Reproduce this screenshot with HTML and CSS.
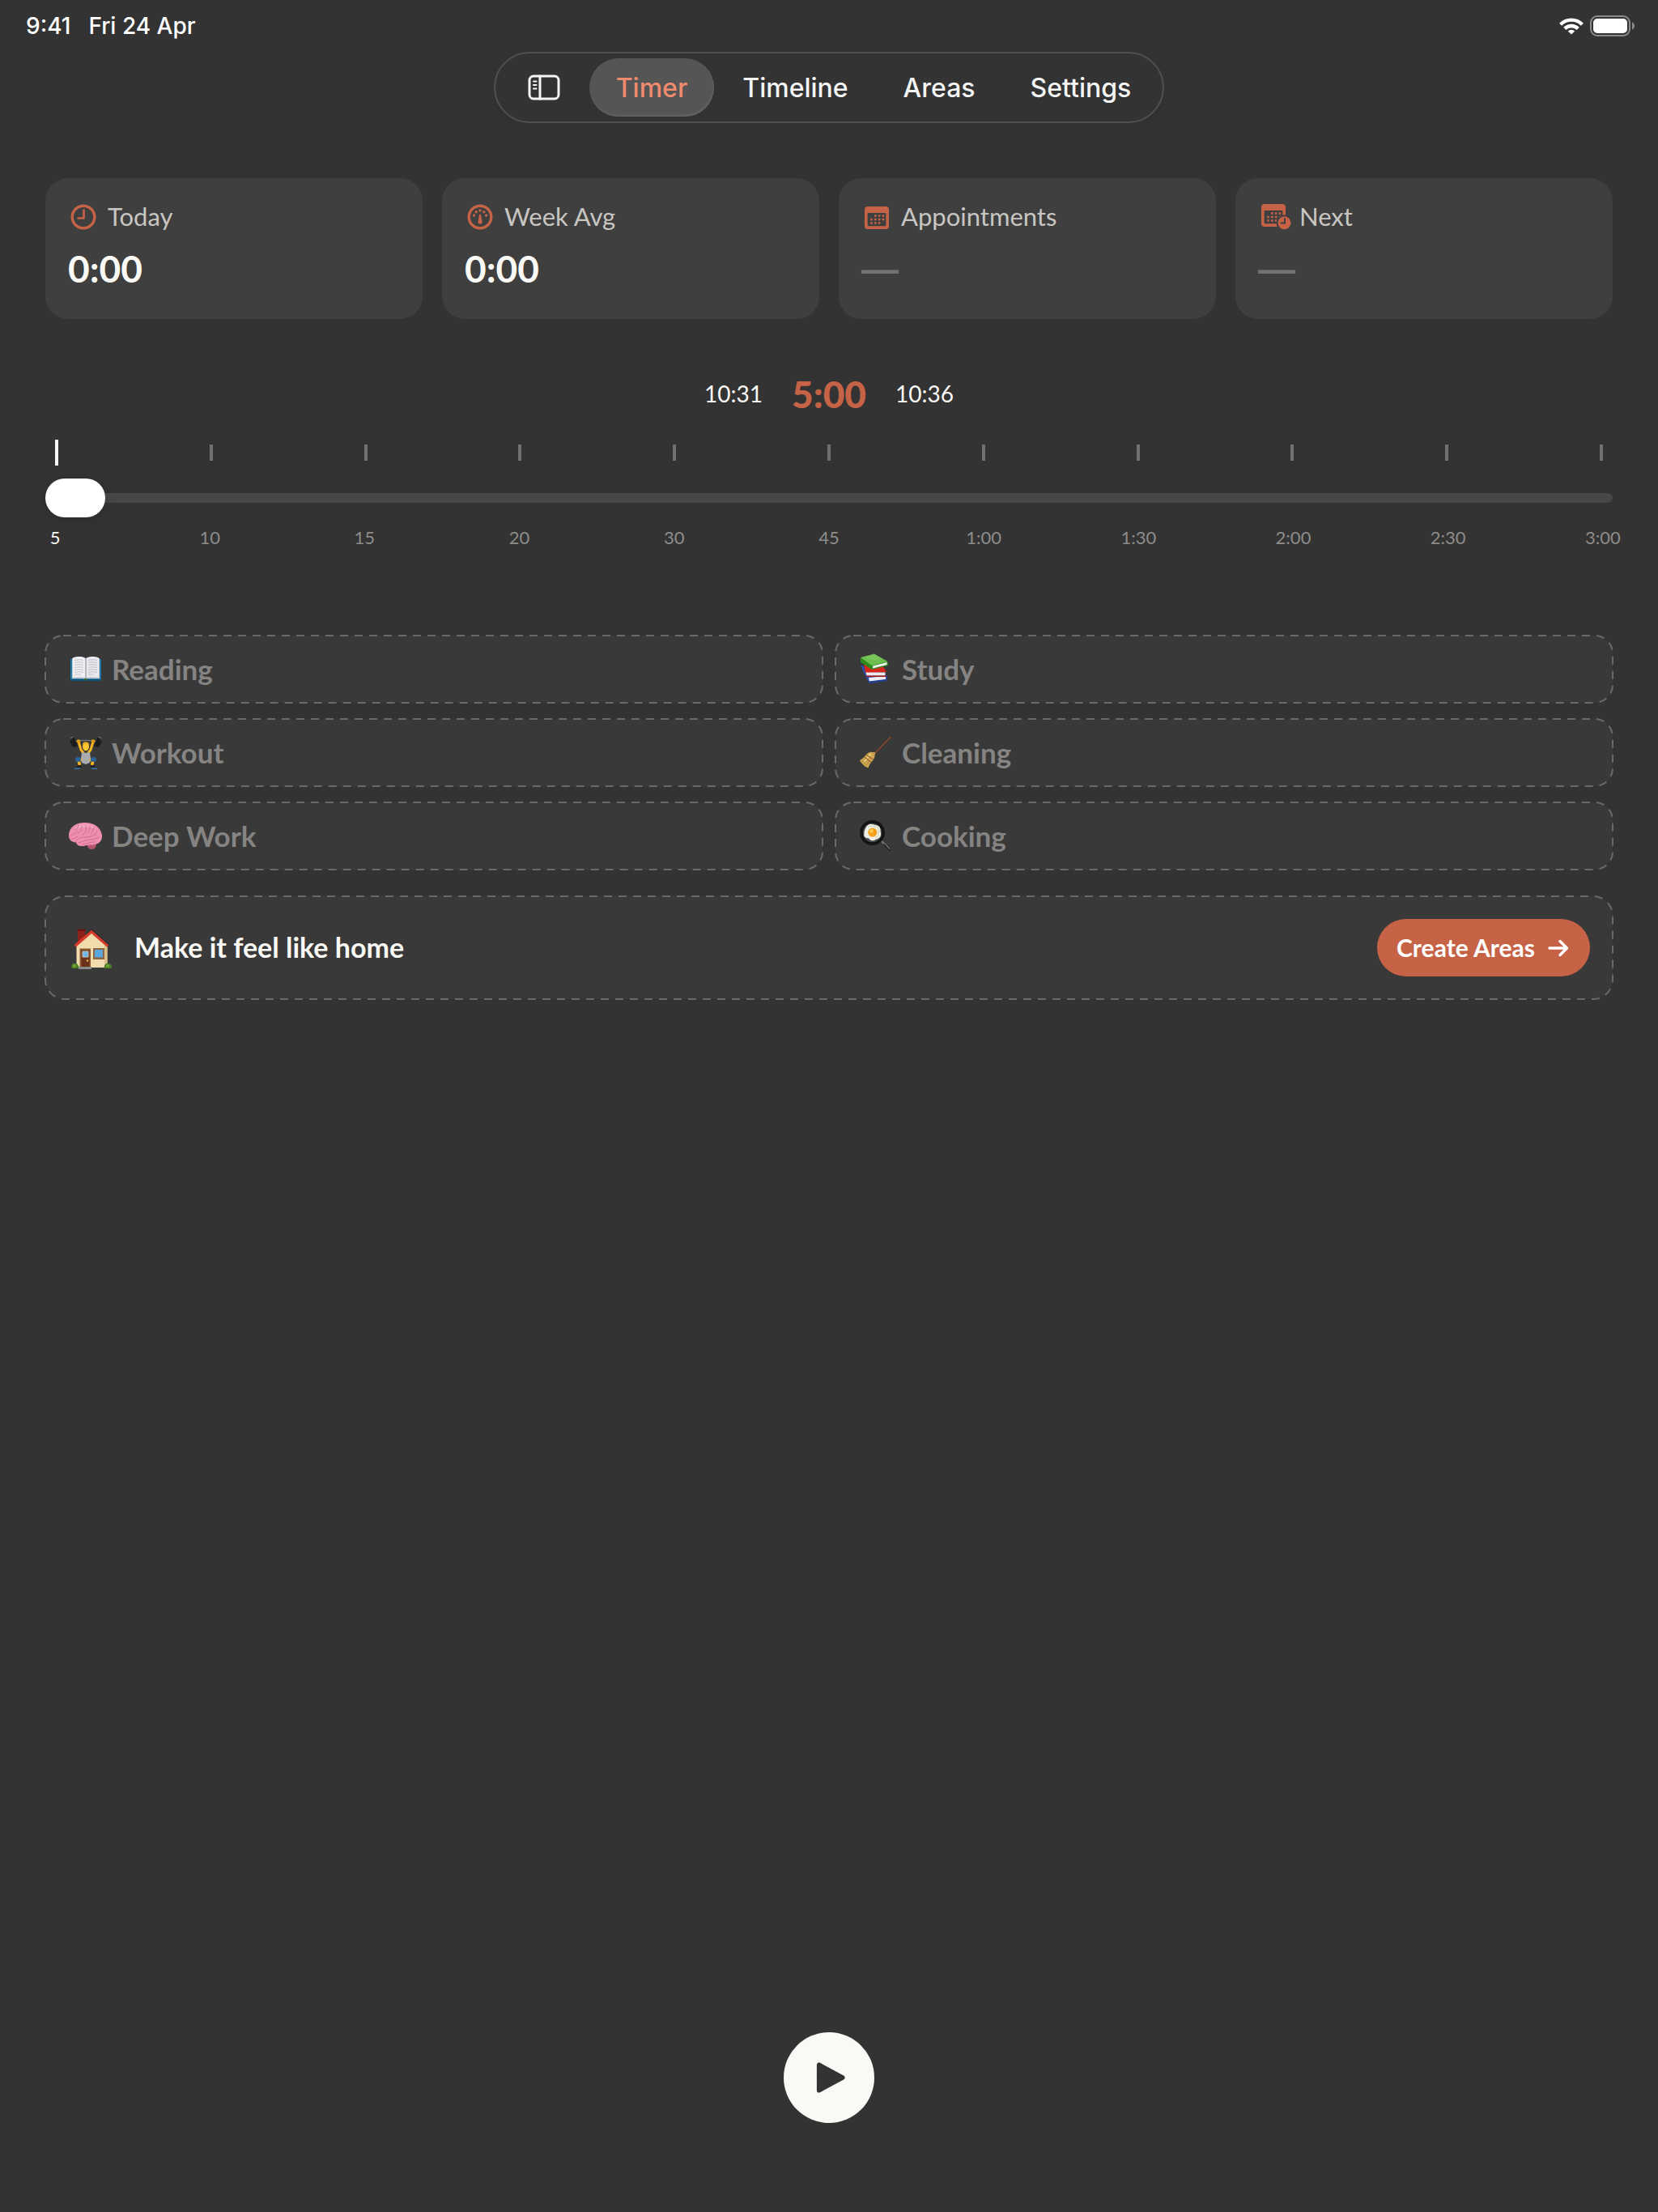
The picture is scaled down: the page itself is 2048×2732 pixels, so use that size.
FILE: index.html
```html
<!DOCTYPE html>
<html lang="en">
<head>
  <meta charset="UTF-8" />
  <meta name="viewport" content="width=device-width, initial-scale=1.0"/>
  <title>Timer</title>
  <link rel="stylesheet" href="styles.css">
</head>
<body>
  <div class="status-bar">
    <span>9:41</span>
    <span>Fri 24 Apr</span>
    <svg class="wifi" viewBox="0 0 30 21" aria-hidden="true">
      <g fill="none" stroke="#fff" stroke-width="4.4">
        <path d="M1.6 8.2a19 19 0 0 1 26.8 0"/>
        <path d="M6.8 13.4a11.6 11.6 0 0 1 16.4 0"/>
      </g>
      <path fill="#fff" d="M15 20.6l-4.2-4.2a6 6 0 0 1 8.4 0z"/>
    </svg>
    <svg class="battery" viewBox="0 0 56 26" aria-hidden="true">
      <rect x="1" y="1" width="48" height="24" rx="8" fill="none" stroke="#8b8b8b" stroke-width="2"/>
      <rect x="4" y="4" width="42" height="18" rx="5" fill="#fff"/>
      <path fill="#8b8b8b" d="M52 8.500c4 1.500 4 7.500 0 9z"/>
    </svg>
  </div>

  <nav class="tab-bar">
    <button class="sidebar-btn" aria-label="Show sidebar">
      <svg viewBox="0 0 40 32" aria-hidden="true">
        <g fill="none" stroke="#f5f5f5" stroke-width="3" stroke-linecap="round">
          <rect x="2" y="2" width="36" height="28" rx="5"/>
          <path d="M15 2v28"/>
          <path stroke-width="2" d="M7 8.500h3.500M7 13h3.500M7 17.500h3.500"/>
        </g>
      </svg>
    </button>
    <button class="tab active">Timer</button>
    <button class="tab">Timeline</button>
    <button class="tab">Areas</button>
    <button class="tab">Settings</button>
  </nav>

  <main>
    <section class="stats">
      <div class="stat">
        <div class="stat-label">
          <svg viewBox="0 0 32 32" aria-hidden="true">
            <g fill="none" stroke="#c66347" stroke-width="3.400" stroke-linecap="round" stroke-linejoin="round">
              <circle cx="16" cy="16" r="13.800"/>
              <path stroke-width="2.600" d="M16.500 7.500v10H9.500"/>
            </g>
          </svg>
          <span>Today</span>
        </div>
        <div class="stat-value">0:00</div>
      </div>
      <div class="stat">
        <div class="stat-label">
          <svg viewBox="0 0 32 32" aria-hidden="true">
            <circle cx="16" cy="16" r="13.800" fill="none" stroke="#c66347" stroke-width="3.400"/>
            <g fill="#c66347">
              <circle cx="8.400" cy="14" r="1.700"/>
              <circle cx="11.200" cy="9.800" r="1.700"/>
              <circle cx="16" cy="8" r="1.700"/>
              <circle cx="20.800" cy="9.800" r="1.700"/>
              <circle cx="23.600" cy="14" r="1.700"/>
              <path d="M16 12.500c.7 0 1 .6 1.100 1.200l1.500 8.300a2.600 2.600 0 1 1-5.200 0l1.500-8.300c.1-.6.4-1.200 1.100-1.200z"/>
            </g>
          </svg>
          <span>Week Avg</span>
        </div>
        <div class="stat-value">0:00</div>
      </div>
      <div class="stat">
        <div class="stat-label">
          <svg viewBox="0 0 32 32" aria-hidden="true">
            <path fill="#c66347" fill-rule="evenodd" d="M5 3h22a4 4 0 0 1 4 4v20a4 4 0 0 1-4 4H5a4 4 0 0 1-4-4V7a4 4 0 0 1 4-4zM5.600 11a1 1 0 0 0-1 1v14a1.200 1.200 0 0 0 1.200 1.200h20.400a1.200 1.200 0 0 0 1.200-1.200V12a1 1 0 0 0-1-1z"/>
            <g fill="none" stroke="#c66347" stroke-width="2.400" stroke-dasharray="2.600 2.200">
              <path d="M13 14.500h12.500"/>
              <path d="M8.200 19h17.500"/>
              <path d="M8.200 23.500h12.500"/>
            </g>
          </svg>
          <span>Appointments</span>
        </div>
        <div class="stat-value empty">—</div>
      </div>
      <div class="stat">
        <div class="stat-label">
          <svg class="wide" viewBox="0 0 38 32" aria-hidden="true">
            <path fill="#c66347" fill-rule="evenodd" d="M5 0h22a4 4 0 0 1 4 4v20a4 4 0 0 1-4 4H5a4 4 0 0 1-4-4V4a4 4 0 0 1 4-4zM5.600 8a1 1 0 0 0-1 1v14a1.200 1.200 0 0 0 1.200 1.200h20.400a1.200 1.200 0 0 0 1.200-1.200V9a1 1 0 0 0-1-1z"/>
            <g fill="none" stroke="#c66347" stroke-width="2.400" stroke-dasharray="2.600 2.200">
              <path d="M13 11.500h12.500"/>
              <path d="M8.200 16h17.500"/>
              <path d="M8.200 20.500h12.500"/>
            </g>
            <circle cx="29.500" cy="23.300" r="10" fill="#3f3f3f"/>
            <circle cx="29.500" cy="23.300" r="8" fill="#c66347"/>
            <path fill="none" stroke="#3f3f3f" stroke-width="2" stroke-linecap="round" d="M30 18v5.500h-4.500"/>
          </svg>
          <span>Next</span>
        </div>
        <div class="stat-value empty">—</div>
      </div>
    </section>

    <section class="duration">
      <div class="times">
        <span>10:31</span>
        <label class="length" for="duration">5:00</label>
        <span>10:36</span>
      </div>
      <div class="ticks">
        <i class="on"></i><i></i><i></i><i></i><i></i><i></i><i></i><i></i><i></i><i></i><i></i>
      </div>
      <input class="slider" id="duration" type="range" min="0" max="10" step="1" value="0">
      <div class="tick-labels">
        <span class="on">5</span>
        <span>10</span>
        <span>15</span>
        <span>20</span>
        <span>30</span>
        <span>45</span>
        <span>1:00</span>
        <span>1:30</span>
        <span>2:00</span>
        <span>2:30</span>
        <span>3:00</span>
      </div>
    </section>

    <section class="areas">
      <button class="area">
        <svg class="dashes" aria-hidden="true"><rect width="100%" height="100%" rx="22"/></svg>
        <svg class="emoji" viewBox="0 0 42 42" aria-hidden="true">
          <path fill="#2278a8" d="M3 8h38v27H3z"/>
          <path fill="#135274" d="M3 33h38v2H3z"/>
          <path fill="#c9c9d0" d="M5 7h34v25H25l-3 2-3-2H5z"/>
          <path fill="#f1f1f5" d="M6 6.500C11 4.500 18 4.500 21.500 7v24C17 29 11 29.500 6 30.500z"/>
          <path fill="#e9e9ef" d="M38 6.500C33 4.500 26 4.500 22.500 7v24C27 29 33 29.500 38 30.500z"/>
          <path fill="#9a9aa3" d="M21.400 6.500h1.200V32h-1.200z"/>
          <path fill="none" stroke="#b2b2ba" stroke-width=".8" d="M8 9.500c4-1 8-1 11 0M8 12.500c4-1 8-1 11 0M8 15.500c4-1 8-1 11 0M8 18.500c4-1 8-1 11 0M8 21.500c4-1 8-1 11 0M8 24.500c4-1 8-1 11 0M8 27.500c3-1 6-1 8 0M25 9.500c3-1 7-1 11 0M25 12.500c3-1 7-1 11 0M25 15.500c3-1 7-1 11 0M25 18.500c3-1 7-1 11 0M25 21.500c3-1 7-1 11 0M25 24.500c3-1 7-1 11 0M25 27.500c2-1 5-1 7 0"/>
          <path fill="#3d6b2f" d="M19.500 32h5l-1.500 2.500h-2z"/>
        </svg>
        <span>Reading</span>
      </button>
      <button class="area">
        <svg class="dashes" aria-hidden="true"><rect width="100%" height="100%" rx="22"/></svg>
        <svg class="emoji" viewBox="0 0 42 42" aria-hidden="true">
          <path fill="#2a4cae" d="M3 15l6 3 24 10 3 1-1 6-21 3-5-9z"/>
          <path fill="#ececf2" d="M13 31l21-2v4.500L14 36z"/>
          <path fill="#1f3a8f" d="M13 35.500l21-2.500v2l-20 2.500z"/>
          <path fill="#d9261c" d="M7 14l24 3 4 7-26 1z"/>
          <path fill="#f1e9e9" d="M9.500 24.500h24v4h-23z"/>
          <path fill="#a81812" d="M9.500 28.500h25V30h-24z"/>
          <path fill="#2f8a1e" d="M3 6v6l14 9 20-5v-2l-1-3z"/>
          <path fill="#f0f2ee" d="M18 16.500l17.500-4.500v3L18 19.500z"/>
          <path fill="#6cbf4f" d="M3 6l17-4.500L36.500 11 17 16z"/>
          <path fill="#86cf6a" d="M8 6l12-3.500L30 8l-8 2z" opacity=".5"/>
        </svg>
        <span>Study</span>
      </button>
      <button class="area">
        <svg class="dashes" aria-hidden="true"><rect width="100%" height="100%" rx="22"/></svg>
        <svg class="emoji" viewBox="0 0 42 42" aria-hidden="true">
          <path fill="none" stroke="#777" stroke-width="1.200" d="M5 7c10-2 24-2 34 0"/>
          <g fill="#1a1b1d">
            <path d="M4 2l3-1 5 11-4 2z"/>
            <path d="M2 6l3-1 3 8-2 1z"/>
            <path d="M40 2l-3-1-5 11 4 2z"/>
            <path d="M42 6l-3-1-3 8 2 1z"/>
          </g>
          <path fill="none" stroke="#8c8f92" stroke-width="1" d="M3.500 2.500l3-1.200M40.500 2.500l-3-1.200"/>
          <path fill="none" stroke="#f7b51d" stroke-width="3" stroke-linecap="round" stroke-linejoin="round" d="M13 7l3 10 3 4M31 7l-3 10-3 4"/>
          <circle cx="13" cy="6.500" r="2.300" fill="#e29a12"/>
          <circle cx="31" cy="6.500" r="2.300" fill="#e29a12"/>
          <ellipse cx="22" cy="13" rx="4" ry="5.200" fill="#fbc62f"/>
          <path fill="#e8a72a" d="M17.800 11c0-5 8.400-5 8.400 0-2-2-6-2-8.400 0z"/>
          <path fill="#a9abad" d="M17 20l5 1 5-1 1 8-1 5-5 2-5-2-1-5z"/>
          <path fill="none" stroke="#f7b51d" stroke-width="3.600" stroke-linejoin="round" d="M17 29l-4 1 1.500 6M27 29l4 1-1.500 6"/>
          <ellipse cx="12.500" cy="29" rx="3.600" ry="3" fill="#2b6396"/>
          <ellipse cx="31.500" cy="29" rx="3.600" ry="3" fill="#2b6396"/>
          <path fill="#202124" d="M10 39l2.500-3h4v3zM34 39l-2.500-3h-4v3z"/>
          <path fill="none" stroke="#3173a8" stroke-width="1.400" d="M8 40.500l7-.5M36 40.500l-7-.5"/>
        </svg>
        <span>Workout</span>
      </button>
      <button class="area">
        <svg class="dashes" aria-hidden="true"><rect width="100%" height="100%" rx="22"/></svg>
        <svg class="emoji" viewBox="0 0 42 42" aria-hidden="true">
          <path stroke="#8a4b25" stroke-width="1.600" stroke-linecap="round" d="M20 22L40 1.500"/>
          <path fill="#cda64f" d="M2 30c5-2 7-7 11-9.500 2-1 5-1 6.500.5s1.500 4.500 0 7C17 32 14 34 12.500 39.500 8 38 4 34 2 30z"/>
          <path fill="#e8cc7e" d="M6 29.500c4-2 6-6 9-7.500l2 1c-3 2-6 6-7.500 10z"/>
          <path fill="none" stroke="#9a6531" stroke-width="1.400" d="M8 26l8 6.500M10.500 23.500l8 5.500"/>
          <path fill="none" stroke="#a67d34" stroke-width=".8" d="M4 32l5-4M7 35l4-5M10 37l3.500-6"/>
          <circle cx="19.500" cy="21.500" r="1.800" fill="#c89b4b"/>
        </svg>
        <span>Cleaning</span>
      </button>
      <button class="area">
        <svg class="dashes" aria-hidden="true"><rect width="100%" height="100%" rx="22"/></svg>
        <svg class="emoji" viewBox="0 0 42 42" aria-hidden="true">
          <path fill="#b5566f" d="M23 29l8-2 4 3c0 4-2 7-6 7-3 0-6-3-6-8z"/>
          <path fill="#ee8fb0" d="M1 20C1 11 8 4 20 4c12-.500 21 6 22 16 .3 6-3 10-8 10.500-4 2-9 0-13 2-6 1.500-10 0-11-4C4 28 1 25 1 20z"/>
          <path fill="#f7b3ca" d="M5 14c3-5 9-8 16-8 6 0 11 2 14 6-4-2-8-3-12-2-6-1-13 0-18 4z" opacity=".7"/>
          <g fill="none" stroke="#d06d92" stroke-width="1" stroke-linecap="round">
            <path d="M3 20c4-3 7-1 8-6M7 12c3 1 5-1 6-5M12 17c3-1 5-4 5-9M18 19c4-2 5-6 4-12M23 18c3-2 4-6 4-10M28 18c2-2 3-5 4-8M33 20c2-2 2-5 3-6"/>
            <path d="M9 28c2-4 6-6 12-6 5 0 9-1 12-4M13 29c5-1 8-4 14-4 4 0 7-1 11-3M18 31c5-1 9-3 15-3M4 24c3 1 5-1 8-3"/>
          </g>
        </svg>
        <span>Deep Work</span>
      </button>
      <button class="area">
        <svg class="dashes" aria-hidden="true"><rect width="100%" height="100%" rx="22"/></svg>
        <svg class="emoji" viewBox="0 0 42 42" aria-hidden="true">
          <path stroke="#77797c" stroke-width="2" stroke-linecap="round" d="M29 27l4 4"/>
          <path stroke="#1b1b1c" stroke-width="3" stroke-linecap="round" d="M33 31l6 6"/>
          <path stroke="#77797c" stroke-width="1.200" stroke-linecap="round" d="M33 30l6 6.500"/>
          <circle cx="17.500" cy="16.500" r="15.500" fill="#161617"/>
          <circle cx="17.500" cy="16.500" r="12.500" fill="#48484a" stroke="#050505"/>
          <path fill="#eef0e6" d="M10 9c4-5 8-3 11-2 5 0 7 4 6.500 8 2 5-1 9-5 9.500-4 3-8 2-9-1-5 0-7-3-6-6 0-4 1-5 2.500-8.500z"/>
          <path fill="none" stroke="#c6cbb5" stroke-width="1" d="M12 10c3-3 6-2 9-1 4 0 5 3 4 7 1 4-1 6-4 6.500"/>
          <circle cx="17.800" cy="16" r="5.600" fill="#f5a11c"/>
          <circle cx="16.500" cy="14.500" r="2.400" fill="#fbc957"/>
        </svg>
        <span>Cooking</span>
      </button>
    </section>

    <section class="promo">
      <svg class="dashes" aria-hidden="true"><rect width="100%" height="100%" rx="24"/></svg>
      <svg class="house" viewBox="0 0 56 56" aria-hidden="true">
        <path fill="#8e2119" d="M12 5h9v10l-9 9z"/>
        <path fill="#6d1711" d="M11.500 4.500h10V7h-10z"/>
        <path fill="#f1dcae" d="M29 9l19.500 17v26h-38V24z"/>
        <path fill="#dcc08a" d="M45 24l3.500 3v25H45z"/>
        <path fill="#26282b" d="M29 4l22 20v2l-22-18-9 8 1-4z"/>
        <path fill="#d63a2c" d="M29 5.500L50.500 24.500 48 26.500 29 10 10 26.500 7.500 24z"/>
        <path fill="#8c5a33" d="M14.500 28.500H28V52H14.500z"/>
        <path fill="#6b3119" d="M16.500 30.500h10V51h-10z"/>
        <path fill="#6bb6ea" stroke="#c9c4b4" d="M18 32h7v7h-7z"/>
        <circle cx="24" cy="43.500" r="1.200" fill="#e7bd4d"/>
        <path fill="#8c6645" d="M31 28h14v14H31z"/>
        <path fill="#5ba6dd" d="M33 30h10v9.500H33z"/>
        <path fill="#8b8d8b" d="M13 51h16v3H13z"/>
        <path fill="#4d7f27" d="M5 53c-2-4 1-7 4-6 3 0 5 3 4 6zM45 53c-1-4 2-7 5-6 3 0 5 3 3 6z"/>
        <circle cx="8" cy="50" r="1.800" fill="#76aa3b"/>
        <circle cx="49" cy="50" r="1.800" fill="#76aa3b"/>
      </svg>
      <span class="promo-text">Make it feel like home</span>
      <button class="create-btn">
        <span>Create Areas</span>
        <svg viewBox="0 0 26 22" aria-hidden="true">
          <path fill="none" stroke="#fff" stroke-width="3.400" stroke-linecap="round" stroke-linejoin="round" d="M2 11h21M15 2.500l8.500 8.500-8.500 8.500"/>
        </svg>
      </button>
    </section>
  </main>

  <button class="play-btn" aria-label="Start timer">
    <svg viewBox="0 0 40 44" aria-hidden="true">
      <path fill="#333" stroke="#333" stroke-width="6" stroke-linejoin="round" d="M5 5.500v33L35.500 22z"/>
    </svg>
  </button>
</body>
</html>
```
FILE: styles.css
```css
* {
  box-sizing: border-box;
}

body {
  margin: 0;
  min-height: 100vh;
  display: flex;
  flex-direction: column;
  padding-bottom: 110px;
  font-family: Lato, sans-serif;
  background-color: #333;
  color: #faf9f5;
}

button {
  margin: 0;
  padding: 0;
  border: none;
  background: none;
  color: inherit;
  font-family: inherit;
  cursor: pointer;
}

svg {
  display: block;
  flex: none;
}

.status-bar {
  display: flex;
  align-items: center;
  gap: 22px;
  height: 64px;
  padding: 0 28px 0 32px;
  font-family: Inter, sans-serif;
  font-size: 28px;
  font-weight: 500;
  color: #fff;
}

.wifi {
  width: 30px;
  height: 21px;
  margin-left: auto;
}

.battery {
  width: 56px;
  height: 26px;
  margin-left: -14px;
}

/* Tab bar */
.tab-bar {
  display: flex;
  align-self: center;
  align-items: center;
  gap: 2px;
  height: 88px;
  padding: 0 6px;
  border: 2px solid #505050;
  border-radius: 44px;
  box-shadow: 0 4px 24px rgba(0, 0, 0, 0.06);
  font-family: Inter, sans-serif;
}

.sidebar-btn {
  padding: 0 34px;
}

.sidebar-btn svg {
  width: 40px;
  height: 32px;
}

.tab {
  height: 72px;
  padding: 0 33px;
  border-radius: 36px;
  font-size: 32px;
  font-weight: 500;
  color: #f5f5f5;
}

.tab.active {
  background-color: #555;
  box-shadow: inset -1px -2px 2px #636363;
  color: #f08b6f;
}

main {
  padding: 68px 56px 0;
}

/* Stat cards */
.stats {
  display: grid;
  grid-template-columns: repeat(4, 1fr);
  gap: 24px;
}

.stat {
  padding: 30px 28px 36px;
  border-radius: 28px;
  background-color: #3f3f3f;
}

.stat-label {
  display: flex;
  align-items: center;
  gap: 14px;
  height: 36px;
  padding-left: 3px;
  font-size: 31px;
  color: #c8c6c2;
}

.stat-label svg {
  width: 32px;
  height: 32px;
}

.stat-label svg.wide {
  width: 38px;
  margin-right: -4px;
}

/* Lato sits low in its line box */
.stat-label span,
.area span,
.promo span {
  padding-bottom: 2px;
}

.stat-value {
  margin-top: 20px;
  font-size: 46px;
  font-weight: 700;
  line-height: 52px;
}

.stat-value.empty {
  font-family: "Liberation Sans", sans-serif;
  color: #737373;
}

/* Duration slider */
.duration {
  margin-top: 63px;
}

.times {
  display: flex;
  justify-content: center;
  align-items: center;
  gap: 36px;
  height: 58px;
  font-size: 28px;
}

.length {
  font-size: 46px;
  font-weight: 900;
  color: #c66347;
}

.ticks {
  display: flex;
  justify-content: space-between;
  align-items: center;
  height: 32px;
  margin-top: 28px;
  padding: 0 12px;
}

.ticks i {
  width: 4px;
  height: 20px;
  background-color: #73716f;
}

.ticks i.on {
  height: 32px;
  background-color: #faf9f5;
}

.slider {
  -webkit-appearance: none;
  appearance: none;
  display: block;
  width: 100%;
  height: 48px;
  margin: 16px 0 0;
  background: none;
}

.slider::-webkit-slider-runnable-track {
  height: 12px;
  border-radius: 6px;
  background-color: #474747;
}

.slider::-webkit-slider-thumb {
  -webkit-appearance: none;
  width: 74px;
  height: 48px;
  margin-top: -18px;
  border-radius: 24px;
  background-color: #fff;
  box-shadow: 0 2px 16px rgba(0, 0, 0, 0.16);
}

.tick-labels {
  display: flex;
  justify-content: space-between;
  margin-top: 12px;
  padding: 0 12px;
  font-size: 22px;
  line-height: 26px;
  color: #8d8c8a;
}

.tick-labels span {
  display: flex;
  justify-content: center;
  width: 0;
}

.tick-labels .on {
  color: #faf9f5;
}

/* Areas */
.areas {
  display: grid;
  grid-template-columns: 1fr 1fr;
  gap: 20px 16px;
  margin-top: 108px;
}

.area {
  position: relative;
  display: flex;
  align-items: center;
  gap: 12px;
  height: 83px;
  padding: 0 28px;
  border-radius: 22px;
  background-color: #393939;
  font-size: 35px;
  font-weight: 700;
  color: #858482;
}

.dashes {
  position: absolute;
  inset: 0;
  width: 100%;
  height: 100%;
  overflow: visible;
  pointer-events: none;
}

.dashes rect {
  fill: none;
  stroke: #696969;
  stroke-width: 2px;
  stroke-dasharray: 10 8;
}

.emoji {
  width: 42px;
  height: 42px;
}

.promo {
  position: relative;
  display: flex;
  align-items: center;
  gap: 26px;
  margin-top: 33px;
  padding: 28px;
  border-radius: 24px;
  background-color: #393939;
}

.house {
  width: 56px;
  height: 56px;
}

.promo-text {
  font-size: 34px;
  font-weight: 700;
}

.create-btn {
  display: flex;
  align-items: center;
  gap: 16px;
  height: 71px;
  margin-left: auto;
  padding: 0 26px 0 24px;
  border-radius: 36px;
  background-color: #c66347;
  font-size: 30px;
  font-weight: 700;
  color: #fff;
}

.create-btn svg {
  width: 26px;
  height: 22px;
}

.play-btn {
  display: flex;
  align-self: center;
  align-items: center;
  justify-content: center;
  width: 112px;
  height: 112px;
  margin-top: auto;
  padding-left: 3px;
  border-radius: 50%;
  background-color: #faf9f6;
}

.play-btn svg {
  width: 38px;
  height: 42px;
}
```
